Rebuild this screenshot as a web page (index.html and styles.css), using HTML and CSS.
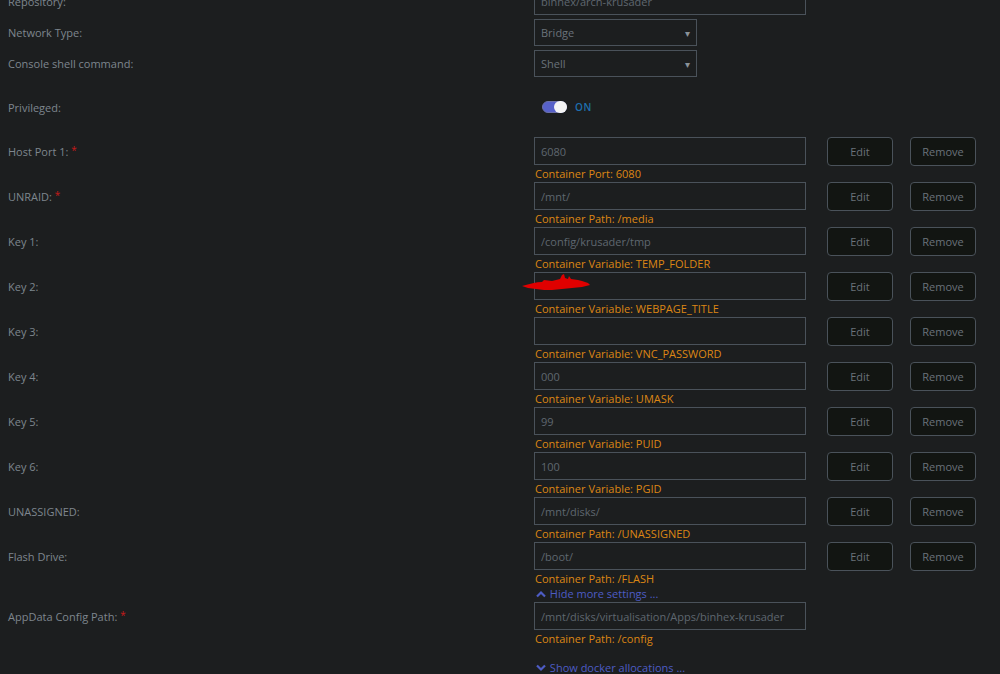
FILE: index.html
```html
<!DOCTYPE html>
<html lang="en">

<head>
  <meta charset="UTF-8">
  <meta name="viewport" content="width=device-width, initial-scale=1.0">
  <title>Update Container</title>
  <link rel="stylesheet" href="styles.css">
</head>

<body>
  <div id="settings">
    <div class="row">
      <div class="label">Repository:</div>
      <div class="field"><input type="text" class="text-input" value="binhex/arch-krusader"></div>
    </div>
    <div class="row row-select">
      <div class="label">Network Type:</div>
      <div class="field"><div class="select">Bridge<span class="caret">&#9662;</span></div></div>
    </div>
    <div class="row row-select">
      <div class="label">Console shell command:</div>
      <div class="field"><div class="select">Shell<span class="caret">&#9662;</span></div></div>
    </div>
    <div class="row row-toggle">
      <div class="label">Privileged:</div>
      <div class="field">
        <span class="toggle"><span class="knob"></span></span>
        <span class="toggle-text">ON</span>
      </div>
    </div>

    <div class="config">
      <div class="line">
        <div class="label">Host Port 1: <span class="req">*</span></div>
        <div class="field"><input type="text" class="text-input" value="6080"></div>
        <div class="buttons"><button>Edit</button><button>Remove</button></div>
      </div>
      <div class="desc">Container Port: 6080</div>
    </div>
    <div class="config">
      <div class="line">
        <div class="label">UNRAID: <span class="req">*</span></div>
        <div class="field"><input type="text" class="text-input" value="/mnt/"></div>
        <div class="buttons"><button>Edit</button><button>Remove</button></div>
      </div>
      <div class="desc">Container Path: /media</div>
    </div>
    <div class="config">
      <div class="line">
        <div class="label">Key 1:</div>
        <div class="field"><input type="text" class="text-input" value="/config/krusader/tmp"></div>
        <div class="buttons"><button>Edit</button><button>Remove</button></div>
      </div>
      <div class="desc">Container Variable: TEMP_FOLDER</div>
    </div>
    <div class="config">
      <div class="line">
        <div class="label">Key 2:</div>
        <div class="field redacted">
          <input type="text" class="text-input" value="">
          <svg class="scribble" width="70" height="20" viewBox="0 0 70 20">
            <path d="M0 13 C8 11 14 9 20 9 L22 7 L30 8 L38 6 L40 2 L42 1 L43 5 L46 6 L47 3 L49 6 L56 7 L60 8 L66 10 L68 12 L60 14 L50 15 L40 16 L30 17 L22 17 L14 16 L6 15 Z" fill="#e00000"/>
          </svg>
        </div>
        <div class="buttons"><button>Edit</button><button>Remove</button></div>
      </div>
      <div class="desc">Container Variable: WEBPAGE_TITLE</div>
    </div>
    <div class="config">
      <div class="line">
        <div class="label">Key 3:</div>
        <div class="field"><input type="text" class="text-input" value=""></div>
        <div class="buttons"><button>Edit</button><button>Remove</button></div>
      </div>
      <div class="desc">Container Variable: VNC_PASSWORD</div>
    </div>
    <div class="config">
      <div class="line">
        <div class="label">Key 4:</div>
        <div class="field"><input type="text" class="text-input" value="000"></div>
        <div class="buttons"><button>Edit</button><button>Remove</button></div>
      </div>
      <div class="desc">Container Variable: UMASK</div>
    </div>
    <div class="config">
      <div class="line">
        <div class="label">Key 5:</div>
        <div class="field"><input type="text" class="text-input" value="99"></div>
        <div class="buttons"><button>Edit</button><button>Remove</button></div>
      </div>
      <div class="desc">Container Variable: PUID</div>
    </div>
    <div class="config">
      <div class="line">
        <div class="label">Key 6:</div>
        <div class="field"><input type="text" class="text-input" value="100"></div>
        <div class="buttons"><button>Edit</button><button>Remove</button></div>
      </div>
      <div class="desc">Container Variable: PGID</div>
    </div>
    <div class="config">
      <div class="line">
        <div class="label">UNASSIGNED:</div>
        <div class="field"><input type="text" class="text-input" value="/mnt/disks/"></div>
        <div class="buttons"><button>Edit</button><button>Remove</button></div>
      </div>
      <div class="desc">Container Path: /UNASSIGNED</div>
    </div>
    <div class="config">
      <div class="line">
        <div class="label">Flash Drive:</div>
        <div class="field"><input type="text" class="text-input" value="/boot/"></div>
        <div class="buttons"><button>Edit</button><button>Remove</button></div>
      </div>
      <div class="desc">Container Path: /FLASH</div>
    </div>

    <div class="link-row">
      <a class="more-link" href="#">
        <svg width="10" height="8" viewBox="0 0 10 8"><path d="M1 6.5 L5 2.5 L9 6.5" fill="none" stroke="currentColor" stroke-width="2.2"/></svg>
        Hide more settings ...
      </a>
    </div>

    <div class="config">
      <div class="line">
        <div class="label">AppData Config Path: <span class="req">*</span></div>
        <div class="field"><input type="text" class="text-input" value="/mnt/disks/virtualisation/Apps/binhex-krusader"></div>
      </div>
      <div class="desc">Container Path: /config</div>
    </div>

    <div class="link-row link-bottom">
      <a class="more-link" href="#">
        <svg width="10" height="8" viewBox="0 0 10 8"><path d="M1 1.5 L5 5.5 L9 1.5" fill="none" stroke="currentColor" stroke-width="2.2"/></svg>
        Show docker allocations ...
      </a>
    </div>
  </div>
</body>

</html>
```

FILE: styles.css
```css
* {
  box-sizing: border-box;
}

body {
  margin: 0;
  background: #1c1e1f;
  font-family: "Open Sans", "Noto Sans", sans-serif;
  font-size: 11px;
  color: #7e868e;
  overflow: hidden;
}

#settings {
  margin-top: -13px;
  padding-left: 8px;
}

.row,
.line {
  display: flex;
  align-items: center;
}

.line {
  height: 28px;
}

.label {
  width: 526px;
  flex: none;
}

.field {
  width: 272px;
  flex: none;
  position: relative;
}

.text-input {
  display: block;
  width: 272px;
  height: 28px;
  margin: 0;
  padding: 0 6px;
  background: #1c1e1f;
  border: 1px solid #4a525a;
  color: #5f676f;
  font-family: inherit;
  font-size: 11px;
  outline: none;
}

.row-select {
  margin-top: 4px;
}

.select {
  width: 163px;
  height: 27px;
  border: 1px solid #4a525a;
  padding: 0 6px;
  display: flex;
  align-items: center;
  justify-content: space-between;
  color: #6a727a;
}

.caret {
  color: #8a9299;
  font-size: 10px;
}

.row-toggle {
  height: 60px;
}

.row-toggle .field {
  display: flex;
  align-items: center;
  padding-left: 8px;
}

.toggle {
  width: 25px;
  height: 12px;
  border-radius: 6px;
  background: #5761c9;
  border: 1px solid #6b70a8;
  position: relative;
}

.knob {
  position: absolute;
  right: -1px;
  top: -1px;
  width: 13px;
  height: 12px;
  border-radius: 6px;
  background: #f4f4f4;
}

.toggle-text {
  margin-left: 8px;
  color: #1e6fae;
  font-size: 10px;
  font-weight: 600;
  letter-spacing: 0.6px;
}

.buttons {
  display: flex;
  gap: 17px;
  margin-left: 21px;
}

button {
  width: 66px;
  height: 29px;
  background: #121512;
  border: 1px solid #4a525a;
  border-radius: 4px;
  color: #6a727a;
  font-family: inherit;
  font-size: 11px;
  padding: 0;
}

.req {
  color: #c81a1a;
  font-size: 10px;
  vertical-align: 2px;
}

.desc {
  margin-left: 527px;
  height: 17px;
  line-height: 17px;
  color: #dc8614;
}

.redacted .scribble {
  position: absolute;
  left: -12px;
  top: 1px;
}

.link-row {
  margin-left: 527px;
  height: 15px;
  line-height: 14px;
}

.link-bottom {
  margin-top: 14px;
}

.more-link {
  color: #4d5cc4;
  text-decoration: none;
}

.more-link svg {
  vertical-align: 0;
  margin-left: 1px;
  margin-right: 1px;
}
```
